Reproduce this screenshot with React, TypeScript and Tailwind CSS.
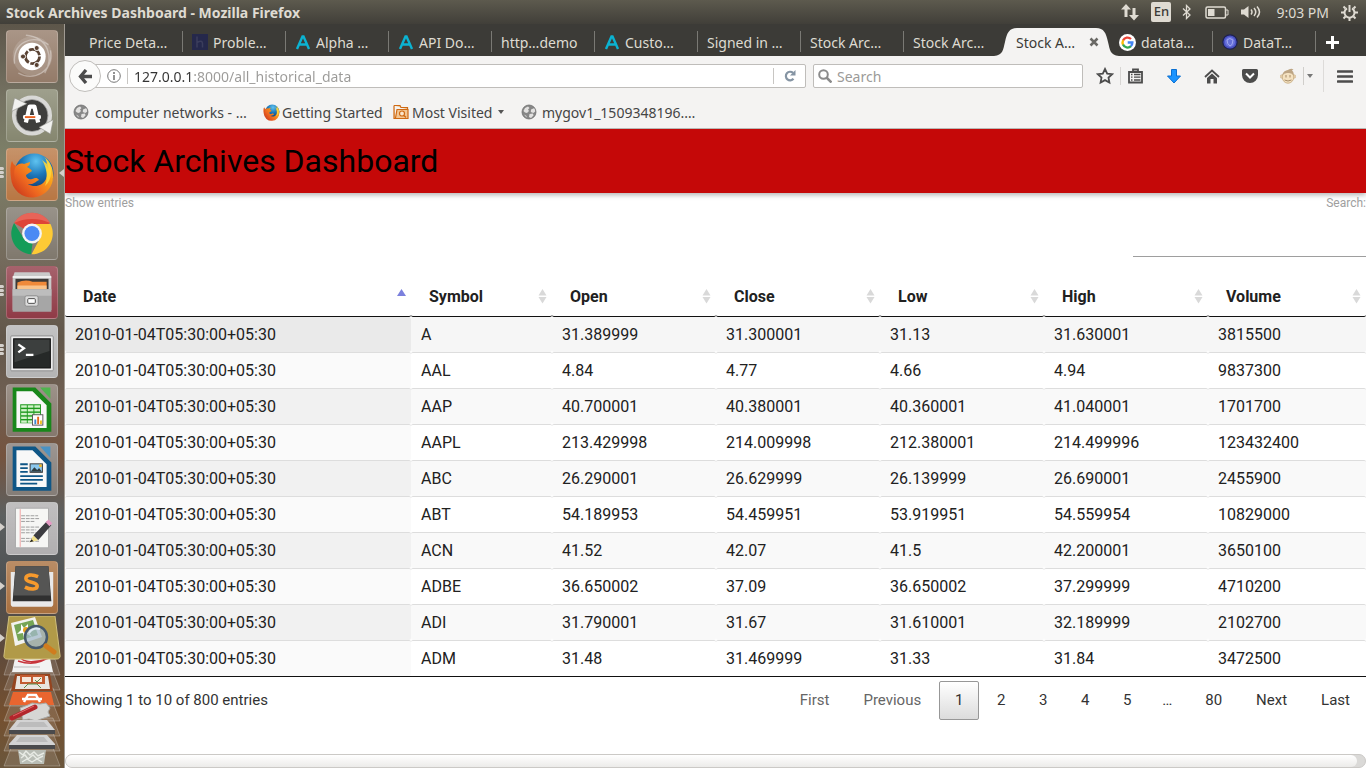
import React from "react";

const UI = "font-['Noto_Sans','Open_Sans',sans-serif]";

/* ---------- data ---------- */

const columns = ["Date", "Symbol", "Open", "Close", "Low", "High", "Volume"];
const stamp = "2010-01-04T05:30:00+05:30";
const rows: string[][] = [
  ["A", "31.389999", "31.300001", "31.13", "31.630001", "3815500"],
  ["AAL", "4.84", "4.77", "4.66", "4.94", "9837300"],
  ["AAP", "40.700001", "40.380001", "40.360001", "41.040001", "1701700"],
  ["AAPL", "213.429998", "214.009998", "212.380001", "214.499996", "123432400"],
  ["ABC", "26.290001", "26.629999", "26.139999", "26.690001", "2455900"],
  ["ABT", "54.189953", "54.459951", "53.919951", "54.559954", "10829000"],
  ["ACN", "41.52", "42.07", "41.5", "42.200001", "3650100"],
  ["ADBE", "36.650002", "37.09", "36.650002", "37.299999", "4710200"],
  ["ADI", "31.790001", "31.67", "31.610001", "32.189999", "2102700"],
  ["ADM", "31.48", "31.469999", "31.33", "31.84", "3472500"],
];

/* ---------- small icons ---------- */

const HackerIcon = () => (
  <svg width="16" height="16" viewBox="0 0 16 16" className="shrink-0">
    <rect width="16" height="16" fill="#25284b" />
    <path d="M5 2.500v11M5 8.500q5.500-3 5.500 1v4" fill="none" stroke="#3b3d5c" strokeWidth="1.500" />
  </svg>
);
const AlphaIcon = () => (
  <svg width="16" height="16" viewBox="0 0 16 16" className="shrink-0">
    <path d="M2 15 7.500 2.500h1L14 15M4.500 10.500h7" fill="none" stroke="#0bb3d2" strokeWidth="2.400" />
  </svg>
);
const GoogleIcon = () => (
  <svg width="17" height="17" viewBox="0 0 17 17" className="shrink-0">
    <circle cx="8.500" cy="8.500" r="8.500" fill="#fff" />
    <g fill="none" strokeWidth="2.300">
      <path d="M4 6.500A5 5 0 0 1 12 5" stroke="#ea4335" />
      <path d="M4.100 6.300a5 5 0 0 0 0 4.500" stroke="#fbbc05" />
      <path d="M4 10.500a5 5 0 0 0 8 1.700" stroke="#34a853" />
      <path d="M11.800 12.200A5 5 0 0 0 13.400 8.500H8.700" stroke="#4285f4" />
    </g>
  </svg>
);
const DataTablesIcon = () => (
  <svg width="16" height="16" viewBox="0 0 16 16" className="shrink-0">
    <circle cx="8" cy="8" r="7.200" fill="#4a52c4" stroke="#1d2050" strokeWidth="1.200" />
    <circle cx="8" cy="8" r="5" fill="#6a73dc" />
    <path d="M5 6q2.500-3 6 0l-1 4.500-2 1.500Q5 10 5 6z" fill="#6670d8" stroke="#a9aff2" strokeWidth=".9" />
  </svg>
);
const GlobeIcon = () => (
  <svg width="16" height="16" viewBox="0 0 16 16" className="shrink-0">
    <circle cx="8" cy="8" r="7" fill="#878787" />
    <path d="M2.500 7 4 4l3-1.500L8.500 4 7 5.500l1 1.500-2 2-2-.5zM10 5.500l3.500-1.500.8 3.500-2 1.500-2.500-1zM8.500 10l3.500-.5.5 2-2.500 2.500-2-1zM3 10.500 5.500 12v1.500z" fill="#e2e1e0" />
    <circle cx="8" cy="8" r="7" fill="none" stroke="#707070" strokeWidth=".8" />
  </svg>
);

const Firefox = ({ size }: { size: number }) => (
  <svg width={size} height={size} viewBox="0 0 46 46" className="shrink-0">
    <defs>
      <radialGradient id="ffb" cx=".55" cy=".2" r=".8">
        <stop offset="0" stopColor="#5fc3f0" />
        <stop offset=".45" stopColor="#1c76b8" />
        <stop offset="1" stopColor="#10305f" />
      </radialGradient>
      <linearGradient id="ffo" x1="1" y1="0" x2=".1" y2=".8">
        <stop offset="0" stopColor="#ffe94a" />
        <stop offset=".35" stopColor="#fba31b" />
        <stop offset=".75" stopColor="#ec6420" />
        <stop offset="1" stopColor="#d0401c" />
      </linearGradient>
    </defs>
    <circle cx="25" cy="21" r="19.500" fill="url(#ffb)" />
    <path
      d="M3 9c1 3 2 4 4 5 2-2 5-3 8-2l6-2c0 2-1 4-3 5 2 1 4 2 5 4l-6 4c0 3 3 5 6 4 3-1 5-2 7 1-3 1-5 5-11 4 6 4 15 2 18-5 2-5 1-10-1-14 2 1 3 3 3 5 1-5-1-10-4-13 6 4 9 11 9 18A21 21 0 0 1 2 26C1 20 1 13 3 9z"
      fill="url(#ffo)"
    />
    <path d="M3 9c1 3 2 4 4 5-3 5-3 13 3 20C3 30 0 18 3 9z" fill="#d9531e" opacity=".6" />
    <path d="m33 8 5 4-1-5c7 8 7 20-1 27 3-8 2-18-3-26z" fill="#ffd83b" opacity=".85" />
  </svg>
);

/* ---------- launcher icons ---------- */

const UbuntuIcon = () => (
  <svg viewBox="0 0 53 53" className="size-full">
    <g fill="none" stroke="#fff" strokeOpacity=".35" strokeWidth="1.500">
      <path d="M8 34C6 12 26 2 44 14M46 20c4 22-18 34-34 24M20 4c24 2 30 24 20 40" />
    </g>
    <circle cx="27" cy="26" r="21" fill="#fff" opacity=".14" />
    <circle cx="26.500" cy="26.500" r="14.500" fill="#fff" />
    <circle cx="27" cy="26.500" r="7.500" fill="none" stroke="#5a4334" strokeWidth="3" strokeDasharray="14 1.700" />
    <g fill="#5a4334" stroke="#fff">
      <circle cx="17" cy="26.500" r="2.700" />
      <circle cx="31.500" cy="17.500" r="2.700" />
      <circle cx="31.500" cy="35.500" r="2.700" />
    </g>
  </svg>
);
const UpdaterIcon = () => (
  <svg viewBox="0 0 53 53" className="size-full">
    <circle cx="26.500" cy="26.500" r="19" fill="#3e3e3c" />
    <circle cx="26.500" cy="26.500" r="19" fill="none" stroke="#d8d8d6" strokeWidth="4.500" />
    <circle cx="26.500" cy="26.500" r="17" fill="none" stroke="#9c9c9a" strokeWidth=".8" />
    <path d="m5 22 3-14 13 6zM49 31l-3 15-12-7z" fill="#f1f1ef" stroke="#8d8d86" strokeWidth=".6" />
    <path d="m20 34 4-17h5l4 17" fill="none" stroke="#fff" strokeWidth="4.500" strokeLinejoin="round" />
    <rect x="17" y="26" width="19" height="4.500" rx="1.500" fill="#fff" />
    <rect x="19" y="27.200" width="11" height="2" fill="#e9601f" />
  </svg>
);
const FirefoxIcon = () => (
  <div className="flex size-full items-center justify-center">
    <Firefox size={46} />
  </div>
);
const ChromeIcon = () => (
  <svg viewBox="0 0 53 53" className="size-full">
    <path d="M26.500 26.500 7.500 15.500A22 22 0 0 1 45.600 15.500z" fill="#de4437" />
    <path d="M26.500 16.500h19.600A22 22 0 0 1 26 48.500l9-17z" fill="#fdca35" />
    <path d="M7.500 15.500 18 32l9 5-1.500 11.500A22 22 0 0 1 7.500 15.500z" fill="#149c58" />
    <path d="M7.500 15.500A22 22 0 0 1 45.600 15.500c-10-6-28-6-38 0z" fill="#f0837a" opacity=".5" />
    <circle cx="26.500" cy="26.500" r="10.500" fill="#f4f4f4" />
    <circle cx="26.500" cy="26.500" r="8" fill="#4b8af4" />
  </svg>
);
const FilesIcon = () => (
  <svg viewBox="0 0 53 53" className="size-full">
    <path d="M8 5h37l2 6v34H6V11z" fill="#c9c9c9" />
    <path d="M6 10h41" stroke="#eee" strokeWidth="2" />
    <rect x="9" y="12" width="35" height="12" fill="#3d3a38" />
    <path d="M11 16q8-4 16-1h15v8H11z" fill="#f08a3a" />
    <path d="M11 19h31v4H11z" fill="#f9c38b" />
    <path d="M6 23h41v24H6z" fill="#a6a6a6" />
    <path d="M6 23h41v7H6z" fill="#bdbdbd" />
    <rect x="19" y="30" width="14" height="11" rx="2" fill="#dcdcdc" stroke="#888" />
    <rect x="22" y="33" width="8" height="5" rx="1" fill="#fff" stroke="#444" />
  </svg>
);
const TerminalIcon = () => (
  <svg viewBox="0 0 53 53" className="size-full">
    <rect x="4" y="10" width="45" height="37" rx="1" fill="#ececec" stroke="#8a8a8a" />
    <rect x="7" y="13" width="39" height="31" fill="#262928" stroke="#111" />
    <path d="M8 14h37v12L8 38z" fill="#4b4e4d" opacity=".6" />
    <path d="m12 19 6 4-6 4.500M20 30h8" fill="none" stroke="#fff" strokeWidth="2.400" />
  </svg>
);
const docShape = "M6 2h24l17 17v30H6z";
const CalcIcon = () => (
  <svg viewBox="0 0 53 53" className="size-full">
    <path d={docShape} fill="#18871a" />
    <path d="M35 2h11v12z" fill="#4fb44f" />
    <path d="M10 6h17l15 15v24H10z" fill="#f8f8f8" />
    <path d="M14 20h22v20H14z" fill="#1d9a1d" />
    <g fill="#d3f3cb">
      {[21, 25, 29, 33, 37].map((y) =>
        [15, 22, 29].map((x) => <rect key={`${x}-${y}`} x={x} y={y} width="6" height="2.500" />),
      )}
    </g>
    <rect x="27" y="31" width="11" height="11" fill="#fff" stroke="#555" />
    <path d="M29 36h2v5h-2z" fill="#3d88d0" />
    <path d="M32 33h2v8h-2z" fill="#e56a1c" />
    <path d="M35 37h2v4h-2z" fill="#f0c020" />
  </svg>
);
const WriterIcon = () => (
  <svg viewBox="0 0 53 53" className="size-full">
    <path d={docShape} fill="#0f5686" />
    <path d="M35 2h11v12z" fill="#4a92c4" />
    <path d="M10 6h17l15 15v24H10z" fill="#f8f8f8" />
    <path d="M14 21h8M14 25h8M14 29h8M14 33.500h24M14 37.500h24M14 41.500h18" stroke="#0f5686" strokeWidth="2" />
    <rect x="24.500" y="20.500" width="13" height="9" fill="#8cc7ec" stroke="#333" />
    <path d="m25 29 4-5 3 3 2-2 3 4z" fill="#2f3c40" />
    <circle cx="35.500" cy="22.500" r="1.500" fill="#f2b21c" />
  </svg>
);
const EditorIcon = () => (
  <svg viewBox="0 0 53 53" className="size-full">
    <path d="M9 5h35v42H9z" fill="#f6f6f4" stroke="#aaa" />
    <path d="M14 6v40" stroke="#f0a0a0" />
    <path
      d="M15 13h18M15 16h20M15 19h14M15 25h20M15 28h16M15 31h18M15 37h12M15 40h20"
      stroke="#999"
      strokeDasharray="4 1"
    />
    <path d="m28 34 14-15 5 4-14 16z" fill="#3c3c40" />
    <path d="m41 20 3-3 4 4-3 3z" fill="#e59ac4" />
    <path d="m24 41 4-7 5 5z" fill="#f2e089" />
    <path d="m24 41 2-3 2 2z" fill="#222" />
  </svg>
);
const SublimeIcon = () => (
  <svg viewBox="0 0 53 53" className="size-full">
    <path d="M4 10h45v34a3 3 0 0 1-3 3H7a3 3 0 0 1-3-3z" fill="#e9e9e9" />
    <path d="M9 4h35l3 37H6z" fill="#303030" />
    <path d="M9 4h35l2 31H7z" fill="#555554" />
    <path
      d="M33 15c-7-3-13-2-13 2 0 5 12 3 12 8 0 4-7 4-13 1"
      fill="none"
      stroke="#f79a2d"
      strokeWidth="3.800"
    />
  </svg>
);

/* Folded stack of launcher tiles at the bottom of the dock */
const FoldedStack = () => (
  <svg width="65" height="152" viewBox="0 0 65 152" className="shrink-0">
    <g fill="#fff" fillOpacity=".12" stroke="#fff" strokeOpacity=".25">
      <path d="M9 43h46l5 16H4z" />
      <path d="M11 56h42l7 18H4z" />
      <path d="M11 72h42l7 18H4z" />
      <path d="M11 87h42l7 18H4z" />
      <path d="M11 102h42l7 18H4z" />
      <path d="M11 117h42l7 18H4z" />
      <path d="M11 132h42l7 18H4z" />
    </g>
    <path d="M15 42h35l3 14H12z" fill="#f2f2f2" />
    <path d="M20 41c3 6 16 6 29 1M18 45q18 6 31-4" fill="none" stroke="#c8343b" strokeWidth="1.500" />
    <path d="M14 51h26" stroke="#bbb" />
    <path d="M15 58h35l3 17H11z" fill="#94441f" />
    <path d="M17 60h31l2 13H15z" fill="#e9e4df" />
    <path d="M20 59h25v9H20z" fill="#c35b31" />
    <path d="M22 61h9v5h-9zM33 61h9v5h-9z" fill="#f5e6da" />
    <path d="m35 64 2 2 4-4M24 72l4-4h9l4 4" fill="none" stroke="#5b8f4a" />
    <path d="M13 76h38l3 13H9z" fill="#e9652f" />
    <path d="m24 86 4-7h8l4 7M22 83h20" fill="none" stroke="#fff" strokeWidth="2.500" />
    <path d="m20 92 8-3 4-2 8 1 6-1 4 5-2 4 2 4-9 3-5 2-7-2-6 1z" fill="#d6d6d4" stroke="#a9a9a7" />
    <path d="m12 102 23-11" stroke="#b3262b" strokeWidth="5" strokeLinecap="round" />
    <path d="m13 100 21-10" stroke="#e0676a" strokeWidth="1" />
    <path d="M17 104h30l8 10v2H9v-2z" fill="#d3d3d3" />
    <path d="M20 106h24l4 5H16z" fill="#bcbcbc" />
    <path d="M9 114h46v4H9z" fill="#4a4a4c" />
    <path d="M17 119h30l8 9v2H9v-2z" fill="#d3d3d3" />
    <path d="M20 121h24l4 5H16z" fill="#bcbcbc" />
    <path d="M9 129h46v4H9z" fill="#4a4a4c" />
    <path d="M18 134h28l-2 14H20z" fill="#b9bdb5" />
    <path
      d="m19 136 4 3 3-4 4 4 4-3 4 4 6-3M21 142l4-3 3 4 5-4 4 4 6-3M22 146l5-3 5 3 5-3 5 3"
      fill="none"
      stroke="#e8ebe5"
      strokeWidth="1.400"
    />
    <path d="M9 0h46l5 39a3 3 0 0 1-3 4H7a3 3 0 0 1-3-4z" fill="#b19a48" stroke="#d0bf7c" />
    <path d="m11 7 24-6 7 20-27 9z" fill="#f2f2ee" />
    <path d="m14 9 19-5 5 15-20 6z" fill="#75a555" />
    <path d="m21 8 3 4 4-4 0 5 6 0-5 3 3 5-5-3-3 5-1-6-6 1 4-4z" fill="#fff" />
    <circle cx="26" cy="14" r="3" fill="#e4a11f" />
    <circle cx="36" cy="21" r="11" fill="#a3b9cc" fillOpacity=".75" stroke="#46586a" strokeWidth="2.500" />
    <path d="M29 17q4-6 11-4" fill="none" stroke="#dce8f2" strokeWidth="2" />
    <path d="m46 30 8 6" stroke="#d07c1e" strokeWidth="5" strokeLinecap="round" />
  </svg>
);

type App = { name: string; bg: string; icon: React.ReactNode; mark?: "bars" | "arrow"; focused?: boolean };

const apps: App[] = [
  { name: "Search your computer", bg: "bg-[#947b69]", icon: <UbuntuIcon /> },
  { name: "Software Updater", bg: "bg-[#868770]", icon: <UpdaterIcon /> },
  { name: "Firefox", bg: "bg-[#b87744]", icon: <FirefoxIcon />, mark: "bars", focused: true },
  { name: "Chrome", bg: "bg-[#7f786d]", icon: <ChromeIcon /> },
  { name: "Files", bg: "bg-[#903b47]", icon: <FilesIcon />, mark: "bars" },
  { name: "Terminal", bg: "bg-[#b4b4b4]", icon: <TerminalIcon />, mark: "bars" },
  { name: "Calc", bg: "bg-[#85786d]", icon: <CalcIcon /> },
  { name: "Writer", bg: "bg-[#857d77]", icon: <WriterIcon /> },
  { name: "Text Editor", bg: "bg-[#b1afb0]", icon: <EditorIcon />, mark: "arrow" },
  { name: "Sublime Text", bg: "bg-[#a8703f]", icon: <SublimeIcon />, mark: "arrow" },
];

function Launcher() {
  return (
    <nav
      aria-label="Launcher"
      className="flex w-[65px] shrink-0 flex-col overflow-hidden border-r border-[#a09a92] bg-[linear-gradient(180deg,#5d564a_0%,#757262_10%,#7d8068_18%,#746a5c_32%,#62574a_42%,#6f5f52_50%,#75543f_58%,#5d6060_66%,#4c5052_76%,#5e4a3c_84%,#75502f_93%,#6a563c_100%)] pt-[6px]"
    >
      {apps.map((a) => (
        <div key={a.name} className="relative mb-[6px] flex shrink-0 justify-center">
          {a.mark === "bars" && (
            <span className="absolute top-[19px] left-0 flex flex-col gap-px">
              <i className="h-[3px] w-1 rounded-r bg-[#d4d0cb]" />
              <i className="h-[3px] w-1 rounded-r bg-[#d4d0cb]" />
              <i className="h-[3px] w-1 rounded-r bg-[#d4d0cb]" />
            </span>
          )}
          {a.mark === "arrow" && (
            <span className="absolute top-[21px] left-0 border-y-4 border-l-[5px] border-y-transparent border-l-[#d4d0cb]" />
          )}
          {a.focused && (
            <span className="absolute top-[21px] right-0 border-y-4 border-r-[5px] border-y-transparent border-r-[#d4d0cb]" />
          )}
          <button
            type="button"
            aria-label={a.name}
            className={`h-[53px] w-[52px] overflow-hidden rounded-[4px] border border-white/20 bg-linear-to-b from-white/20 to-transparent ${a.bg}`}
          >
            {a.icon}
          </button>
        </div>
      ))}
      <button type="button" aria-label="More applications" className="relative -mt-1 flex shrink-0">
        <FoldedStack />
        <span className="absolute top-[18px] left-0 border-y-4 border-l-[5px] border-y-transparent border-l-[#d4d0cb]" />
      </button>
    </nav>
  );
}

/* ---------- system bar ---------- */

function SystemBar() {
  return (
    <header
      className={`${UI} flex h-6 shrink-0 items-center justify-between bg-linear-to-b from-[#5d5a4e] to-[#413f39] pr-2 pl-[6px] text-[#dfdbd2]`}
    >
      <h1 className="text-[14px] font-bold">Stock Archives Dashboard - Mozilla Firefox</h1>
      <div className="flex items-center text-[14px]">
        <svg width="18" height="18" viewBox="0 0 18 18" fill="#dfdbd2">
          <path d="M5 1 0 6.500h3.500V14h3V6.500H10zM13 17.500l5-5.500h-3.500V5h-3v7H8z" />
        </svg>
        <span className="ml-3 flex h-5 w-5 items-center justify-center rounded-[2px] bg-[#dfdbd2] text-[13px] font-medium text-[#3c3b37]">
          En
        </span>
        <svg width="10" height="16" viewBox="0 0 10 16" className="ml-[11px]" fill="none" stroke="#dfdbd2" strokeWidth="1.300">
          <path d="m1 4.500 7 6.500-3.500 3.500v-13L8 5l-7 6.500" />
        </svg>
        <svg width="24" height="13" viewBox="0 0 24 13" className="ml-[13px]">
          <rect x="1" y="1" width="19.500" height="11" rx="1.500" fill="none" stroke="#dfdbd2" strokeWidth="1.500" />
          <path d="M3 3h6.500v7H3z" fill="#dfdbd2" />
          <path d="M21 4h2v5h-2" fill="none" stroke="#dfdbd2" />
        </svg>
        <svg width="21" height="14" viewBox="0 0 21 14" className="ml-3">
          <path d="M0 4.500h3L7.500 1v12L3 9.500H0z" fill="#dfdbd2" />
          <path d="M10 4.500q2 2.500 0 5M13 3q3.500 4 0 8M16 1.500q5 5.500 0 11" fill="none" stroke="#dfdbd2" strokeWidth="1.500" />
        </svg>
        <time className="ml-[14px]">9:03 PM</time>
        <svg width="17" height="17" viewBox="0 0 17 17" className="ml-3" fill="none" stroke="#dfdbd2">
          <path d="M6 4.300a5 5 0 1 0 5 0" strokeWidth="2" />
          <path d="M8.500 1v7" strokeWidth="2" />
          <path d="m2.500 2.500 2 2M14.500 2.500l-2 2M0 8.500h3M14 8.500h3M2.500 14.500l2-2M14.500 14.500l-2-2M8.500 14v3" strokeWidth="2" />
        </svg>
      </div>
    </header>
  );
}

/* ---------- browser chrome ---------- */

const tabs: { label: string; icon?: React.ReactNode; active?: boolean }[] = [
  { label: "Price Deta…" },
  { label: "Proble…", icon: <HackerIcon /> },
  { label: "Alpha …", icon: <AlphaIcon /> },
  { label: "API Do…", icon: <AlphaIcon /> },
  { label: "http…demo" },
  { label: "Custo…", icon: <AlphaIcon /> },
  { label: "Signed in …" },
  { label: "Stock Arc…" },
  { label: "Stock Arc…" },
  { label: "Stock A…", active: true },
  { label: "datata…", icon: <GoogleIcon /> },
  { label: "DataT…", icon: <DataTablesIcon /> },
];

function TabStrip() {
  return (
    <div role="tablist" className="flex h-8 shrink-0 items-end bg-[#3c3b37] pl-[15px] text-[14px] text-[#dfdbd2]">
      {tabs.map((t, i) =>
        t.active ? (
          <div key={i} className="relative flex h-7 w-[103px] items-center text-[#3c3b37]">
            <svg
              width="125"
              height="28"
              viewBox="0 0 125 28"
              className="absolute top-0 -left-[13px] max-w-none"
              fill="#f4f3f2"
            >
              <path d="M0 28c9-1 9-6 11-14C13 5 15 0 23 0h79c8 0 10 5 12 14 2 8 2 13 11 14z" />
            </svg>
            <button type="button" role="tab" aria-selected="true" className="relative pl-[9px]">
              {t.label}
            </button>
            <button type="button" aria-label="Close tab" className="relative mr-[11px] ml-auto">
              <svg width="10" height="10" viewBox="0 0 10 10">
                <path d="m1.500 1.500 7 7m0-7-7 7" stroke="#6a6965" strokeWidth="2.500" />
              </svg>
            </button>
          </div>
        ) : (
          <button
            key={i}
            type="button"
            role="tab"
            aria-selected="false"
            className="relative flex h-7 w-[103px] items-center gap-[5px] pl-[9px] whitespace-nowrap"
          >
            {t.icon}
            {t.label}
            {tabs[i + 1]?.active ? null : <span className="absolute top-[3px] right-0 h-[21px] w-px bg-[#7a7974]" />}
          </button>
        ),
      )}
      <button type="button" aria-label="New tab" className="flex h-7 w-8 items-center justify-center">
        <svg width="13" height="13" viewBox="0 0 13 13">
          <path d="M6.500 0v13M0 6.500h13" stroke="#fff" strokeWidth="3" />
        </svg>
      </button>
    </div>
  );
}

function NavBar() {
  return (
    <div className="flex h-10 shrink-0 items-center pr-[13px] text-[14px]">
      <button
        type="button"
        aria-label="Back"
        className="relative z-10 ml-1 flex size-8 shrink-0 items-center justify-center rounded-full border border-[#c0bebb] bg-[#fbfbfa]"
      >
        <svg width="15" height="15" viewBox="0 0 15 15" fill="none" stroke="#4c4c4c" strokeWidth="3.300">
          <path d="M8 1 2.500 7.500 8 14M3 7.500h11" />
        </svg>
      </button>
      <div className="-ml-2 flex h-6 flex-1 items-center rounded-r-[2px] border border-[#bfbdba] bg-white pl-[13px]">
        <svg width="14" height="14" viewBox="0 0 14 14" className="shrink-0" fill="none" stroke="#777">
          <circle cx="7" cy="7" r="6.300" />
          <path d="M7 6v5M7 3v2" strokeWidth="1.600" />
        </svg>
        <span className="mx-[6px] h-4 w-px shrink-0 bg-[#c8c6c3]" />
        <input
          type="text"
          aria-label="Address"
          defaultValue="127.0.0.1:8000/all_historical_data"
          className="min-w-0 flex-1 bg-[linear-gradient(90deg,#333_60px,#9b9a98_60px)] bg-clip-text text-transparent outline-none"
        />
        <button
          type="button"
          aria-label="Reload"
          className="flex h-4 w-8 items-center justify-center border-l border-[#c8c6c3]"
        >
          <svg width="12" height="12" viewBox="0 0 12 12">
            <path d="M9.500 8.800A4.300 4.300 0 1 1 9 2.800" fill="none" stroke="#8594a3" strokeWidth="2.200" />
            <path d="M11.500 0v5.500H6z" fill="#8594a3" />
          </svg>
        </button>
      </div>
      <label className="ml-[7px] flex h-6 w-[270px] items-center gap-[5px] rounded-[2px] border border-[#bfbdba] bg-white pl-1">
        <svg width="14" height="14" viewBox="0 0 14 14" fill="none" stroke="#8b8b8b">
          <circle cx="5.500" cy="5.500" r="4.300" strokeWidth="2" />
          <path d="m8.500 8.500 5 5" strokeWidth="2.500" />
        </svg>
        <input
          type="search"
          aria-label="Search the web"
          placeholder="Search"
          className="min-w-0 flex-1 outline-none placeholder:text-[#9b9a98]"
        />
      </label>
      <button type="button" aria-label="Bookmark this page" className="ml-[13px]">
        <svg width="18" height="18" viewBox="0 0 18 18" fill="none" stroke="#4c4c4c" strokeWidth="1.800">
          <path d="m9 2 2.200 4.600 4.900.6-3.600 3.400.9 4.900L9 13.100l-4.400 2.400.9-4.900L1.900 7.200l4.900-.6z" />
        </svg>
      </button>
      <span className="ml-[6px] h-[18px] w-px bg-[#d8d6d4]" />
      <button type="button" aria-label="Library" className="ml-[7px]">
        <svg width="15" height="16" viewBox="0 0 15 16" fill="none" stroke="#4c4c4c" strokeWidth="1.800">
          <path d="M1 4h13v10.500H1zM5 3.500V1.500h5v2" />
          <path d="M3 6.500h1.500M3 9.200h1.500M3 12h1.500M6 6.500h6.500M6 9.200h6.500M6 12h6.500" strokeWidth="1.300" />
        </svg>
      </button>
      <button type="button" aria-label="Downloads" className="ml-6">
        <svg width="14" height="15" viewBox="0 0 14 15">
          <path d="M4.500.5h5V7H13.500L7 14 .5 7h4z" fill="#1a94ff" stroke="#0a6fd0" />
        </svg>
      </button>
      <button type="button" aria-label="Home" className="ml-[23px]">
        <svg width="16" height="15" viewBox="0 0 16 15">
          <path d="m1 8 7-6.500L15 8" fill="none" stroke="#4c4c4c" strokeWidth="1.800" />
          <path d="m3 9 5-4.500L13 9v5.500H9.500V10h-3v4.500H3z" fill="#4c4c4c" />
        </svg>
      </button>
      <button type="button" aria-label="Pocket" className="ml-[22px]">
        <svg width="16" height="14" viewBox="0 0 16 14">
          <path d="M1.500 0h13A1.500 1.500 0 0 1 16 1.500V6a8 8 0 0 1-16 0V1.500A1.500 1.500 0 0 1 1.500 0z" fill="#4c4c4c" />
          <path d="m4 4.500 4 4 4-4" fill="none" stroke="#fff" strokeWidth="2" />
        </svg>
      </button>
      <button type="button" aria-label="Greasemonkey" className="ml-[22px]">
        <svg width="16" height="16" viewBox="0 0 16 16">
          <circle cx="2" cy="8.500" r="1.800" fill="#e9d2ae" stroke="#cdb48c" strokeWidth=".6" />
          <circle cx="14" cy="8.500" r="1.800" fill="#e9d2ae" stroke="#cdb48c" strokeWidth=".6" />
          <ellipse cx="8" cy="9" rx="5.800" ry="6.200" fill="#f4e1c0" stroke="#cdb48c" />
          <path d="M2.500 7.500Q3 3 7 2.500q4-3 6.500-1-2.500 1-.5 2 1 2 .5 4Q12 4.500 8 5 4 4.500 2.500 7.500z" fill="#bda584" />
          <path d="M6 7v2.500M10 7v2.500M4.500 12q3.500 2 7 0" stroke="#a58a66" fill="none" />
        </svg>
      </button>
      <button type="button" aria-label="Greasemonkey menu" className="ml-[7px] flex h-[18px] items-center border-l border-[#d0cecb] pl-[3px]">
        <span className="border-x-[3px] border-t-4 border-x-transparent border-t-[#777]" />
      </button>
      <span className="ml-[10px] h-8 w-px bg-[#dddbd9]" />
      <button type="button" aria-label="Open menu" className="ml-[13px]">
        <svg width="16" height="13" viewBox="0 0 16 13">
          <path d="M1 1.500h14M1 6.500h14M1 11.500h14" stroke="#4c4c4c" strokeWidth="2.600" strokeLinecap="round" />
        </svg>
      </button>
    </div>
  );
}

function Bookmarks() {
  const link = "flex items-center text-[#454545]";
  return (
    <div className="flex h-8 shrink-0 items-center pl-2 text-[14px] whitespace-nowrap">
      <a href="#networks" className={`${link} w-[190px] gap-[6px]`}>
        <GlobeIcon />
        computer networks - …
      </a>
      <a href="#start" className={`${link} w-[130px] gap-[2px]`}>
        <Firefox size={17} />
        Getting Started
      </a>
      <button type="button" className={`${link} w-[128px] gap-[3px]`}>
        <svg width="16" height="16" viewBox="0 0 16 16" fill="none" stroke="#cf6a14" strokeWidth="1.200">
          <path d="M1 1.500h6l1 2h6.500v2M1 1.500v13h14V5.500H4L2.500 14" fill="#f3c693" />
          <circle cx="9" cy="9.500" r="2.500" fill="#fbe7cf" />
          <path d="m11 11.500 2 2" strokeWidth="1.500" />
        </svg>
        Most Visited
        <span className="ml-[3px] border-x-[3px] border-t-4 border-x-transparent border-t-[#555]" />
      </button>
      <a href="#mygov" className={`${link} gap-[5px]`}>
        <GlobeIcon />
        mygov1_1509348196.…
      </a>
    </div>
  );
}

/* ---------- page ---------- */

function SortIcon({ active }: { active: boolean }) {
  return (
    <svg width="9" height="16" viewBox="0 0 9 16" className="shrink-0">
      {active ? (
        <path d="M4.500 1 9 8H0z" fill="#7b80dd" />
      ) : (
        <path d="M4.500 1 8.500 7.500h-8zM.5 9h8L4.500 15.500z" fill="#d9d9d9" />
      )}
    </svg>
  );
}

function DataTable() {
  return (
    <table className="w-full table-fixed border-separate border-spacing-0 border-b border-[#111] text-left text-[16px] leading-[19px]">
      <colgroup>
        <col />
        <col className="w-[141px]" />
        <col className="w-[164px]" />
        <col className="w-[164px]" />
        <col className="w-[164px]" />
        <col className="w-[164px]" />
        <col className="w-[158px]" />
      </colgroup>
      <thead>
        <tr>
          {columns.map((c, i) => (
            <th key={c} scope="col" className="rounded-[2px] border-b border-[#111] p-0">
              <button type="button" className="flex h-10 w-full items-center justify-between pr-[5px] pl-[18px] font-bold">
                {c}
                <SortIcon active={i === 0} />
              </button>
            </th>
          ))}
        </tr>
      </thead>
      <tbody>
        {rows.map((r, i) => {
          const line = i === 0 ? "" : "border-t border-[#ddd]";
          const bg = i === 0 ? "bg-[#f6f6f6]" : i % 2 === 0 ? "bg-[#f9f9f9]" : "bg-white";
          const sorted = i === 0 ? "bg-[#eaeaea]" : i % 2 === 0 ? "bg-[#f1f1f1]" : "bg-[#fafafa]";
          return (
            <tr key={r[0]}>
              <td className={`rounded-[2px] px-[10px] py-2 ${line} ${sorted}`}>{stamp}</td>
              {r.map((v, j) => (
                <td key={j} className={`rounded-[2px] px-[10px] py-2 ${line} ${bg}`}>
                  {v}
                </td>
              ))}
            </tr>
          );
        })}
      </tbody>
    </table>
  );
}

function Pagination() {
  const base = "h-[39px] rounded-[2px] border";
  const off = `${base} border-transparent px-[15px] text-[#666]`;
  const num = `${base} w-10 border-transparent text-[#333]`;
  const word = `${base} border-transparent px-[15px] text-[#333]`;
  return (
    <nav aria-label="Table pages" className="flex items-center gap-[2px]">
      <button type="button" disabled className={off}>First</button>
      <button type="button" disabled className={off}>Previous</button>
      <button
        type="button"
        aria-current="page"
        className={`${base} w-10 border-[#979797] bg-linear-to-b from-white to-[#dcdcdc] text-[#333]`}
      >
        1
      </button>
      {["2", "3", "4", "5"].map((p) => (
        <button key={p} type="button" className={num}>{p}</button>
      ))}
      <span className="-ml-[2px] px-[15px] text-[#333]">…</span>
      {["80", "Next", "Last"].map((p) => (
        <button key={p} type="button" className={word}>{p}</button>
      ))}
    </nav>
  );
}

function Page() {
  return (
    <main className="flex min-h-0 flex-1 flex-col overflow-hidden border-t border-[#b9b7b5] bg-white font-['Roboto',sans-serif] text-[#212121]">
      <div className="flex h-16 shrink-0 items-center bg-[#c50808] shadow-[0_2px_5px_rgba(0,0,0,0.3)]">
        <h2 className="text-[32px] text-black">Stock Archives Dashboard</h2>
      </div>
      <div className="mb-[19px] flex shrink-0 items-start justify-between text-[12px] leading-5 text-[#9e9e9e]">
        <span>Show entries</span>
        <label className="flex flex-col items-end">
          Search:
          <input type="search" className="h-11 w-[233px] border-b border-[#9e9e9e] outline-none" />
        </label>
      </div>
      <DataTable />
      <div className="flex items-start justify-between pt-1 text-[15px]">
        <p className="pt-2 text-[#333]">Showing 1 to 10 of 800 entries</p>
        <Pagination />
      </div>
      <div className="mt-auto h-[14px] shrink-0 rounded-[7px] border border-[#cbc9c6] bg-[#dad9d7] pr-2">
        <div className="h-full rounded-[7px] bg-linear-to-b from-white to-[#ecebe9]" />
      </div>
    </main>
  );
}

export default function App() {
  return (
    <div className="flex h-screen flex-col overflow-hidden">
      <SystemBar />
      <div className="flex min-h-0 flex-1">
        <Launcher />
        <div className="flex min-w-0 flex-1 flex-col">
          <div className={`${UI} shrink-0 bg-[#f4f3f2]`}>
            <TabStrip />
            <NavBar />
            <Bookmarks />
          </div>
          <Page />
        </div>
      </div>
    </div>
  );
}
